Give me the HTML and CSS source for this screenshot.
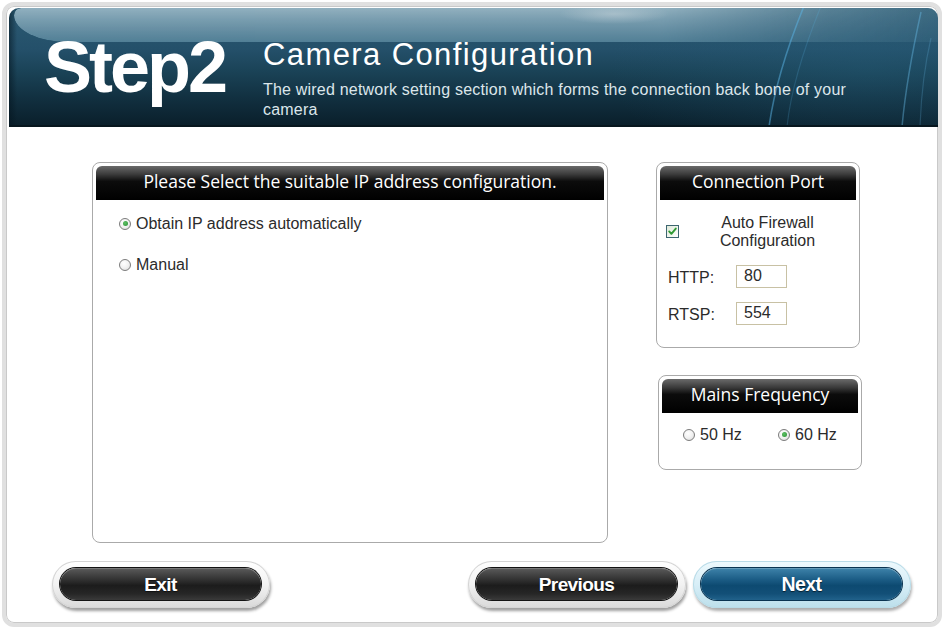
FILE: index.html
```html
<!DOCTYPE html>
<html lang="en">
<head>
<meta charset="utf-8">
<title>Step2 - Camera Configuration</title>
<link rel="stylesheet" href="styles.css">
</head>
<body>
<div class="frame">
  <header class="hdr">
    <svg class="hdr-fx" width="929" height="119" viewBox="0 0 929 119" aria-hidden="true">
      <defs>
        <radialGradient id="gl" cx="0.5" cy="0.5" r="0.5">
          <stop offset="0" stop-color="#c9d6dc" stop-opacity="0.5"/>
          <stop offset="1" stop-color="#c9d6dc" stop-opacity="0"/>
        </radialGradient>
      </defs>
      <ellipse cx="605" cy="6" rx="55" ry="10" fill="url(#gl)"/>
      <path d="M795 -2 C780 35 766 75 760 119" fill="none" stroke="#5ab4e6" stroke-opacity="0.5" stroke-width="1.6"/>
      <path d="M812 -2 C795 40 782 80 778 119" fill="none" stroke="#5ab4e6" stroke-opacity="0.2" stroke-width="1.2"/>
      <path d="M912 4 C903 45 896 85 893 119" fill="none" stroke="#6cc0ee" stroke-opacity="0.4" stroke-width="1.5"/>
      <path d="M922 30 C915 60 912 90 911 119" fill="none" stroke="#6cc0ee" stroke-opacity="0.22" stroke-width="1.2"/>
    </svg>
    <div class="step">Step2</div>
    <div class="hdr-text">
      <h1>Camera Configuration</h1>
      <p>The wired network setting section which forms the connection back bone of your camera</p>
    </div>
  </header>

  <main class="main">
    <section class="panel ip">
      <div class="bar">Please Select the suitable IP address configuration.</div>
      <div class="opts">
        <div class="opt"><span class="radio on"></span>Obtain IP address automatically</div>
        <div class="opt"><span class="radio"></span>Manual</div>
      </div>
    </section>

    <aside class="side">
      <section class="panel port">
        <div class="bar">Connection Port</div>
        <div class="fw">
          <svg class="chk" width="13" height="13" viewBox="0 0 13 13" aria-hidden="true">
            <defs>
              <linearGradient id="cb" x1="0" y1="0" x2="1" y2="1">
                <stop offset="0" stop-color="#dfe9d8"/>
                <stop offset="1" stop-color="#ffffff"/>
              </linearGradient>
            </defs>
            <rect x="0.5" y="0.5" width="12" height="12" fill="url(#cb)" stroke="#3d6670"/>
            <path d="M3.2 6.4 L5.4 8.8 L9.8 3.6" fill="none" stroke="#2f9a34" stroke-width="1.9" stroke-linecap="round" stroke-linejoin="round"/>
          </svg>
          <div class="fw-text">Auto Firewall<br>Configuration</div>
        </div>
        <div class="field">
          <span class="lbl">HTTP:</span>
          <input class="inp" type="text" value="80">
        </div>
        <div class="field f2">
          <span class="lbl">RTSP:</span>
          <input class="inp" type="text" value="554">
        </div>
      </section>

      <section class="panel freq">
        <div class="bar">Mains Frequency</div>
        <div class="hz">
          <div class="opt w95"><span class="radio"></span>50 Hz</div>
          <div class="opt"><span class="radio on"></span>60 Hz</div>
        </div>
      </section>
    </aside>
  </main>

  <footer class="btns">
    <div class="btn dark exit"><span>Exit</span></div>
    <div class="btn dark prev"><span>Previous</span></div>
    <div class="btn blue next"><span>Next</span></div>
  </footer>
</div>
</body>
</html>
```

FILE: styles.css
```css
html, body {
  margin: 0;
  padding: 0;
  background: #ffffff;
}

body {
  font-family: "Liberation Sans", Arial, sans-serif;
  color: #2b2b2b;
}

.frame {
  box-sizing: border-box;
  width: 940px;
  height: 625px;
  margin: 2px 0 0 2px;
  border: 4px solid #e0e0e0;
  border-radius: 12px;
  padding: 2px 0 0 3px;
  background: #ffffff;
  box-shadow: inset 0 0 0 1px #c9c9c9;
}

/* ---------- header ---------- */
.hdr {
  position: relative;
  box-sizing: border-box;
  height: 119px;
  border-radius: 10px 10px 0 0;
  border-bottom: 2px solid #07161e;
  display: flex;
  align-items: flex-start;
  overflow: hidden;
  color: #ffffff;
  background:
    radial-gradient(ellipse 260px 120px at 860px 60px, rgba(40, 100, 130, 0.3), rgba(40, 100, 130, 0) 100%),
    linear-gradient(90deg, rgba(4, 20, 30, 0.55) 0px, rgba(4, 20, 30, 0) 8px),
    linear-gradient(180deg, #2c5a72 0%, #24506a 35%, #1a4256 55%, #112f3f 78%, #0a1f2b 100%);
}

.hdr::before {
  content: "";
  position: absolute;
  left: 5px;
  top: 0;
  right: 0;
  height: 34px;
  border-radius: 8px 8px 0 60px / 8px 8px 0 30px;
  background: linear-gradient(180deg, #a4c0cd 0%, #86a9ba 35%, #6a94a8 75%, #5a889e 100%);
  -webkit-mask-image: linear-gradient(90deg, #000 0%, #000 70%, rgba(0, 0, 0, 0.45) 88%, rgba(0, 0, 0, 0.2) 100%);
  mask-image: linear-gradient(90deg, #000 0%, #000 70%, rgba(0, 0, 0, 0.45) 88%, rgba(0, 0, 0, 0.2) 100%);
  opacity: 0.85;
}

.hdr-fx {
  position: absolute;
  left: 0;
  top: 0;
  pointer-events: none;
}

.step {
  position: relative;
  margin: 23px 0 0 35px;
  width: 219px;
  flex: none;
  font-weight: bold;
  font-size: 72px;
  line-height: 72px;
  letter-spacing: -3px;
  color: #ffffff;
}

.hdr-text {
  position: relative;
  margin-top: 29px;
}

.hdr-text h1 {
  margin: 0;
  font-weight: normal;
  font-size: 31px;
  line-height: 36px;
  letter-spacing: 1.4px;
  color: #ffffff;
}

.hdr-text p {
  margin: 6.5px 0 0;
  width: 600px;
  font-size: 16px;
  line-height: 20px;
  letter-spacing: 0.2px;
  color: #dce6eb;
}

/* ---------- main ---------- */
.main {
  display: flex;
  align-items: flex-start;
  padding-top: 35px;
}

.panel {
  box-sizing: border-box;
  border: 1px solid #aaaaaa;
  border-radius: 8px;
  background: #ffffff;
  padding: 3px 3px 0;
}

.bar {
  box-sizing: border-box;
  height: 34px;
  line-height: 30px;
  border-radius: 6px 6px 0 0;
  text-align: center;
  color: #ffffff;
  font-family: "Open Sans", "Liberation Sans", sans-serif;
  font-size: 17.5px;
  white-space: nowrap;
  background: linear-gradient(180deg, #6a6a6a 0%, #3a3a3a 25%, #0c0c0c 45%, #000000 100%);
}

.ip {
  width: 516px;
  height: 381px;
  margin-left: 83px;
}

.opts {
  display: flex;
  flex-direction: column;
  gap: 21px;
  padding: 13.5px 0 0 23px;
}

.opt {
  display: flex;
  align-items: center;
  gap: 5px;
  font-size: 16px;
  line-height: 20px;
  color: #2b2b2b;
  white-space: nowrap;
}

.radio {
  position: relative;
  box-sizing: border-box;
  width: 12px;
  height: 12px;
  flex: none;
  border-radius: 50%;
  border: 1px solid #7c7c7c;
  background: radial-gradient(circle at 40% 35%, #ffffff 0%, #f1f1f1 50%, #d6d6d6 100%);
}

.radio.on::after {
  content: "";
  position: absolute;
  left: 2.5px;
  top: 2.5px;
  width: 5px;
  height: 5px;
  border-radius: 50%;
  background: radial-gradient(circle at 40% 40%, #5cc063 0%, #2c8f36 100%);
}

.side {
  margin-left: 48px;
}

.port {
  width: 204px;
  height: 186px;
}

.fw {
  display: flex;
  align-items: center;
  margin-top: 13.5px;
  padding-left: 6px;
}

.chk {
  flex: none;
  display: block;
}

.fw-text {
  flex: 1;
  text-align: center;
  font-size: 16px;
  line-height: 18px;
  color: #2b2b2b;
}

.field {
  display: flex;
  align-items: center;
  margin-top: 15.5px;
  padding-left: 8px;
}

.field.f2 {
  margin-top: 14px;
}

.lbl {
  width: 68px;
  flex: none;
  padding-top: 2px;
  font-size: 16px;
  line-height: 20px;
  color: #2b2b2b;
}

.inp {
  box-sizing: border-box;
  width: 51px;
  height: 23px;
  margin: 0;
  border: 1px solid #c8c1a4;
  padding: 0 0 2px 7px;
  font-family: "Liberation Sans", Arial, sans-serif;
  font-size: 16px;
  color: #2b2b2b;
  background: #ffffff;
  outline: none;
}

.freq {
  width: 204px;
  height: 95px;
  margin: 27px 0 0 2px;
}

.hz {
  display: flex;
  margin-top: 11.5px;
  padding-left: 21px;
}

.w95 {
  width: 95px;
}

/* ---------- buttons ---------- */
.btns {
  display: flex;
  margin-top: 18px;
}

.btn {
  box-sizing: border-box;
  width: 218px;
  height: 47px;
  padding: 7px 9px 8px 8px;
  border-radius: 24px;
}

.btn span {
  display: block;
  height: 32px;
  line-height: 33px;
  border-radius: 16px;
  text-align: center;
  color: #ffffff;
  font-weight: bold;
  font-size: 19px;
  letter-spacing: -0.6px;
  text-shadow: 0 1px 1px rgba(0, 0, 0, 0.6);
}

.btn.dark {
  background: linear-gradient(180deg, #ffffff 0%, #f2f2f2 50%, #d9d9d9 100%);
  box-shadow: 1px 3px 3px rgba(0, 0, 0, 0.38), inset 0 0 0 1px #d4d4d4;
}

.btn.dark span {
  background: linear-gradient(180deg, #5b5b5b 0%, #333333 35%, #1c1c1c 55%, #262626 80%, #3a3a3a 100%);
  box-shadow: 0 0 0 1px #121212, inset 0 1px 0 rgba(255, 255, 255, 0.18);
}

.btn.blue {
  background: linear-gradient(180deg, #eef9fd 0%, #d7eef7 50%, #bcdfeb 100%);
  box-shadow: 1px 3px 3px rgba(0, 0, 0, 0.32), inset 0 0 0 1px #b9dbe7;
}

.btn.blue span {
  background: linear-gradient(180deg, #3e83aa 0%, #1c5d86 35%, #0d4a71 55%, #124f77 80%, #21628b 100%);
  box-shadow: 0 0 0 1px #0a3350, inset 0 1px 0 rgba(255, 255, 255, 0.2);
  font-size: 19.5px;
}

.exit {
  margin-left: 43px;
}

.prev {
  margin-left: 198px;
}

.next {
  margin-left: 7px;
}
```
